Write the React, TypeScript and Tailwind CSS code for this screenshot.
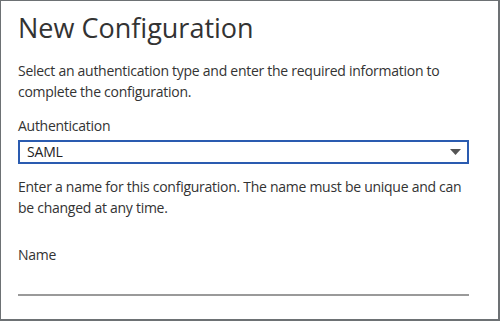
import React from "react";

export default function App() {
  return (
    <div
      className="w-[500px] h-[321px] bg-white border-t border-l border-r-2 border-b-2 border-[#6d7174] pl-[17px] pr-[29px] pt-[11px] text-[#333333]"
      style={{ fontFamily: "'Open Sans', 'Liberation Sans', sans-serif" }}
    >
      <h1 className="text-[27px] leading-[32px] font-normal text-[#333333]">New Configuration</h1>
      <p className="mt-[16px] text-[14px] leading-[21px] tracking-[-0.27px]">
        Select an authentication type and enter the required information to complete the configuration.
      </p>
      <div className="mt-[13px] text-[14px] leading-[21px] tracking-[-0.27px]">Authentication</div>
      <div className="mt-[4px] h-[24px] border-2 border-[#2a5bb0] flex items-center justify-between pl-[7px] pr-[6px]">
        <span className="text-[14px] leading-[20px] text-[#222] tracking-[-0.2px]">SAML</span>
        <svg width="11" height="6" viewBox="0 0 11 6">
          <path d="M0 0 L11 0 L5.5 6 Z" fill="#555555" />
        </svg>
      </div>
      <p className="mt-[12px] text-[14px] leading-[21px] tracking-[-0.27px]">
        Enter a name for this configuration. The name must be unique and can be changed at any time.
      </p>
      <div className="mt-[26px] text-[14px] leading-[21px] tracking-[-0.27px]">Name</div>
      <div className="h-[31px] border-b-2 border-[#9a9a9a]" />
    </div>
  );
}
